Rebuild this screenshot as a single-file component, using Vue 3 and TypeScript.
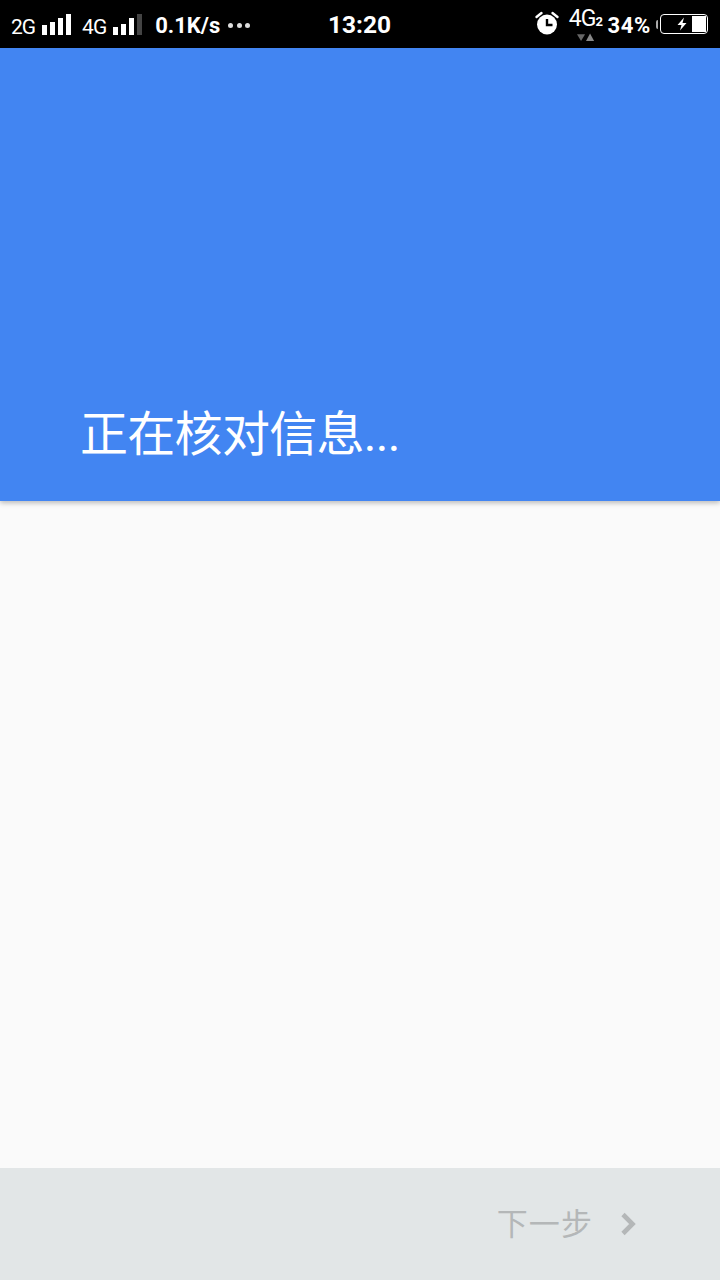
<script setup lang="ts">
const bars1 = [10, 13, 17, 21]
const bars2 = [8, 11, 17, 21]
</script>

<template>
  <div class="page">
    <header class="status">
      <div class="left">
        <span class="net first">2G</span>
        <span class="bars">
          <i v-for="(h, idx) in bars1" :key="idx" class="bar" :class="'h' + h"></i>
        </span>
        <span class="net second">4G</span>
        <span class="bars">
          <i v-for="(h, idx) in bars2" :key="idx" class="bar" :class="['h' + h, { dim: idx === 3 }]"></i>
        </span>
        <span class="speed">0.1K/s</span>
        <span class="dots"><i></i><i></i><i></i></span>
      </div>
      <div class="time">13:20</div>
      <div class="right">
        <svg class="alarm" width="26" height="26" viewBox="0 0 26 26">
          <circle cx="13" cy="14.5" r="10" fill="#fff" />
          <path d="M13 9v6h5.500" fill="none" stroke="#000" stroke-width="2.400" />
          <path d="M2.500 7 L7.500 3 M23.500 7 L18.500 3" stroke="#fff" stroke-width="2.400" stroke-linecap="round" />
        </svg>
        <div class="lte">
          <span class="lte-text">4G<small>2</small></span>
          <svg class="arrows" width="18" height="9" viewBox="0 0 20 9">
            <path d="M0 1h9L4.500 8.500z" fill="#666" />
            <path d="M10 8.500h9L14.500 0z" fill="#888" />
          </svg>
        </div>
        <span class="pct">34%</span>
        <span class="sliver"></span>
        <div class="battery">
          <svg class="bolt" width="12" height="14" viewBox="0 0 12 13">
            <path d="M8 0 L1.500 7.500 H5.500 L4 13 L10.500 5.500 H6.500 Z" fill="#fff" />
          </svg>
          <div class="fill"></div>
        </div>
      </div>
    </header>

    <section class="hero">
      <h1 class="title">正在核对信息...</h1>
    </section>

    <main class="body"></main>

    <footer class="footer">
      <span class="next">下一步</span>
      <svg class="chev" width="18" height="26" viewBox="0 0 18 26">
        <path d="M3 3.500 L12.500 13 L3 22.500" fill="none" stroke="#b4b7b8" stroke-width="4.600" />
      </svg>
    </footer>
  </div>
</template>

<style scoped>
.page {
  width: 720px;
  height: 1280px;
  display: flex;
  flex-direction: column;
  background: #fafafa;
  font-family: Roboto, "Noto Sans CJK SC", sans-serif;
  overflow: hidden;
}
.status {
  height: 48px;
  flex: none;
  background: #000;
  color: #fff;
  position: relative;
  display: flex;
  align-items: center;
  justify-content: space-between;
}
.left {
  display: flex;
  align-items: center;
  padding-left: 11px;
}
.net {
  font-size: 21px;
  letter-spacing: -1px;
  line-height: 26px;
  margin-top: 5px;
}
.second {
  margin-left: 11px;
}
.bars {
  display: flex;
  align-items: flex-end;
  gap: 3px;
  height: 22px;
  margin-left: 7px;
  margin-top: -1px;
}
.bar {
  display: block;
  width: 5px;
  background: #fff;
}
.h8 { height: 8px; }
.h10 { height: 10px; }
.h11 { height: 11px; }
.h13 { height: 13px; }
.h17 { height: 17px; }
.h21 { height: 21px; }
.dim {
  background: #444;
}
.speed {
  font-size: 22px;
  font-weight: 700;
  margin-left: 13px;
  margin-top: 4px;
  line-height: 26px;
}
.dots {
  display: flex;
  gap: 3.500px;
  margin-left: 8px;
  margin-top: 2px;
}
.dots i {
  display: block;
  width: 5px;
  height: 5px;
  border-radius: 50%;
  background: #ddd;
}
.time {
  position: absolute;
  left: 328px;
  top: 10px;
  font-size: 24.500px;
  font-weight: 700;
  line-height: 30px;
}
.right {
  display: flex;
  align-items: center;
  padding-right: 12px;
}
.alarm {
  margin-right: 7px;
  margin-top: -2px;
}
.lte {
  width: 36px;
  height: 38px;
  display: flex;
  flex-direction: column;
  align-items: center;
  margin-right: 4px;
}
.lte-text {
  font-size: 23px;
  line-height: 26px;
  letter-spacing: -1px;
  margin-top: 1px;
  flex: none;
}
.lte-text small {
  font-size: 13px;
  font-weight: 700;
}
.arrows {
  flex: none;
  margin-top: -2px;
  margin-left: 1px;
}
.pct {
  font-size: 22px;
  font-weight: 700;
  line-height: 26px;
  margin-top: 3px;
  letter-spacing: 0.700px;
}
.sliver {
  width: 2px;
  height: 9px;
  margin: 0 2px 0 5px;
  background: #aaa;
  border-radius: 2px 0 0 2px;
}
.battery {
  width: 48px;
  height: 20px;
  box-sizing: border-box;
  border: 1.500px solid #fff;
  border-radius: 4px;
  display: flex;
  align-items: center;
  justify-content: flex-end;
  padding: 1px;
  gap: 4px;
  margin-top: -1px;
}
.fill {
  width: 14px;
  height: 100%;
  background: #fff;
}
.hero {
  height: 453px;
  flex: none;
  box-sizing: border-box;
  background: #4285f2;
  display: flex;
  align-items: flex-end;
  padding: 0 0 40px 80px;
  box-shadow: 0 2px 5px rgba(0, 0, 0, 0.26);
  position: relative;
}
.title {
  margin: 0;
  font-size: 48px;
  font-weight: 400;
  line-height: 52px;
  color: #fff;
  letter-spacing: -0.700px;
}
.body {
  flex: 1;
  background: #fafafa;
}
.footer {
  height: 112px;
  flex: none;
  background: #e2e6e7;
  display: flex;
  align-items: center;
  justify-content: flex-end;
  padding-right: 82px;
  color: #b4b7b8;
}
.next {
  font-size: 31px;
  line-height: 40px;
  letter-spacing: 1.100px;
  margin-top: 1px;
}
.chev {
  margin-left: 27px;
}
</style>
